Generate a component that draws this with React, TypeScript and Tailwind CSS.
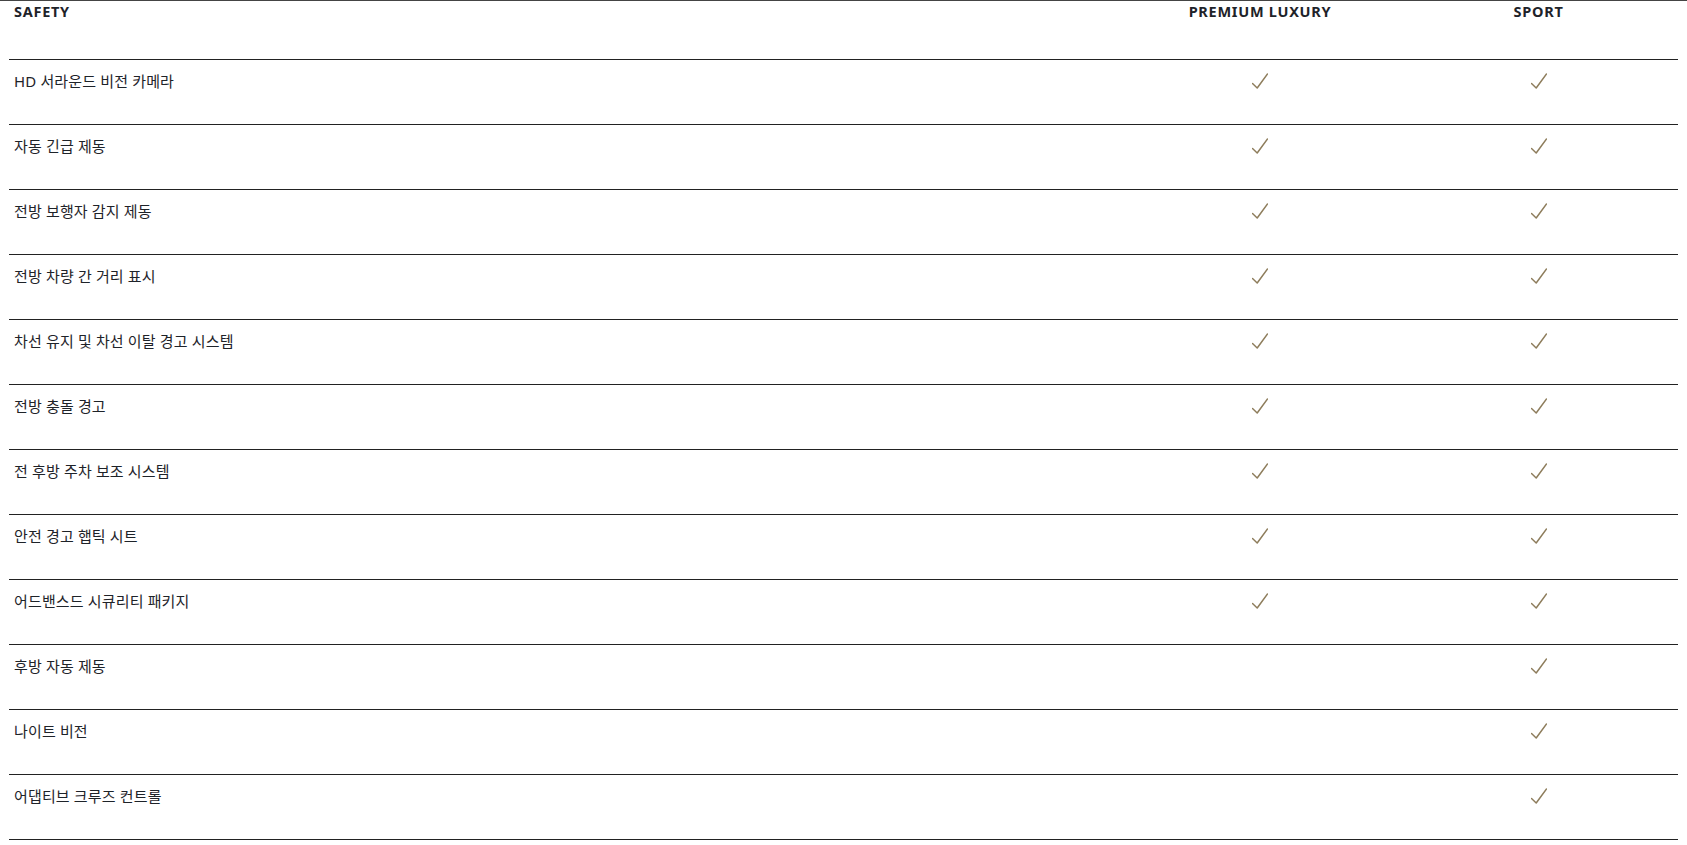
const rows: { label: string; premium: boolean; sport: boolean }[] = [
  { label: "HD 서라운드 비전 카메라", premium: true, sport: true },
  { label: "자동 긴급 제동", premium: true, sport: true },
  { label: "전방 보행자 감지 제동", premium: true, sport: true },
  { label: "전방 차량 간 거리 표시", premium: true, sport: true },
  { label: "차선 유지 및 차선 이탈 경고 시스템", premium: true, sport: true },
  { label: "전방 충돌 경고", premium: true, sport: true },
  { label: "전 후방 주차 보조 시스템", premium: true, sport: true },
  { label: "안전 경고 햅틱 시트", premium: true, sport: true },
  { label: "어드밴스드 시큐리티 패키지", premium: true, sport: true },
  { label: "후방 자동 제동", premium: false, sport: true },
  { label: "나이트 비전", premium: false, sport: true },
  { label: "어댑티브 크루즈 컨트롤", premium: false, sport: true },
]

function Check() {
  return (
    <svg width="16" height="16" viewBox="0 0 16 16" fill="none" className="mx-auto">
      <path d="M0.5 10.5 L5.2 15 L15.5 1" stroke="#8e7d5c" strokeWidth="1.5" strokeLinecap="round" strokeLinejoin="round" />
    </svg>
  )
}

export default function App() {
  return (
    <div className="min-h-screen bg-white border-t border-[#444]" style={{ fontFamily: '"Noto Sans", "Noto Sans CJK KR", sans-serif' }}>
      <div className="ml-[9px] w-[1669px]">
        <div className="grid grid-cols-[1fr_278px_279px] h-[59px] border-b border-[#222] text-[14.5px] font-bold tracking-[0.05em] text-[#1e2329]">
          <div className="pl-[5px]">SAFETY</div>
          <div className="text-center">PREMIUM LUXURY</div>
          <div className="text-center">SPORT</div>
        </div>
        {rows.map((row) => (
          <div key={row.label} className="grid grid-cols-[1fr_278px_279px] h-[65px] border-b border-[#222] text-[15px] tracking-[0.01em] text-[#1e2329]">
            <div className="pl-[5px] pt-[10px] leading-[22px]">{row.label}</div>
            <div className="pt-[13px]">{row.premium && <Check />}</div>
            <div className="pt-[13px]">{row.sport && <Check />}</div>
          </div>
        ))}
      </div>
    </div>
  )
}
